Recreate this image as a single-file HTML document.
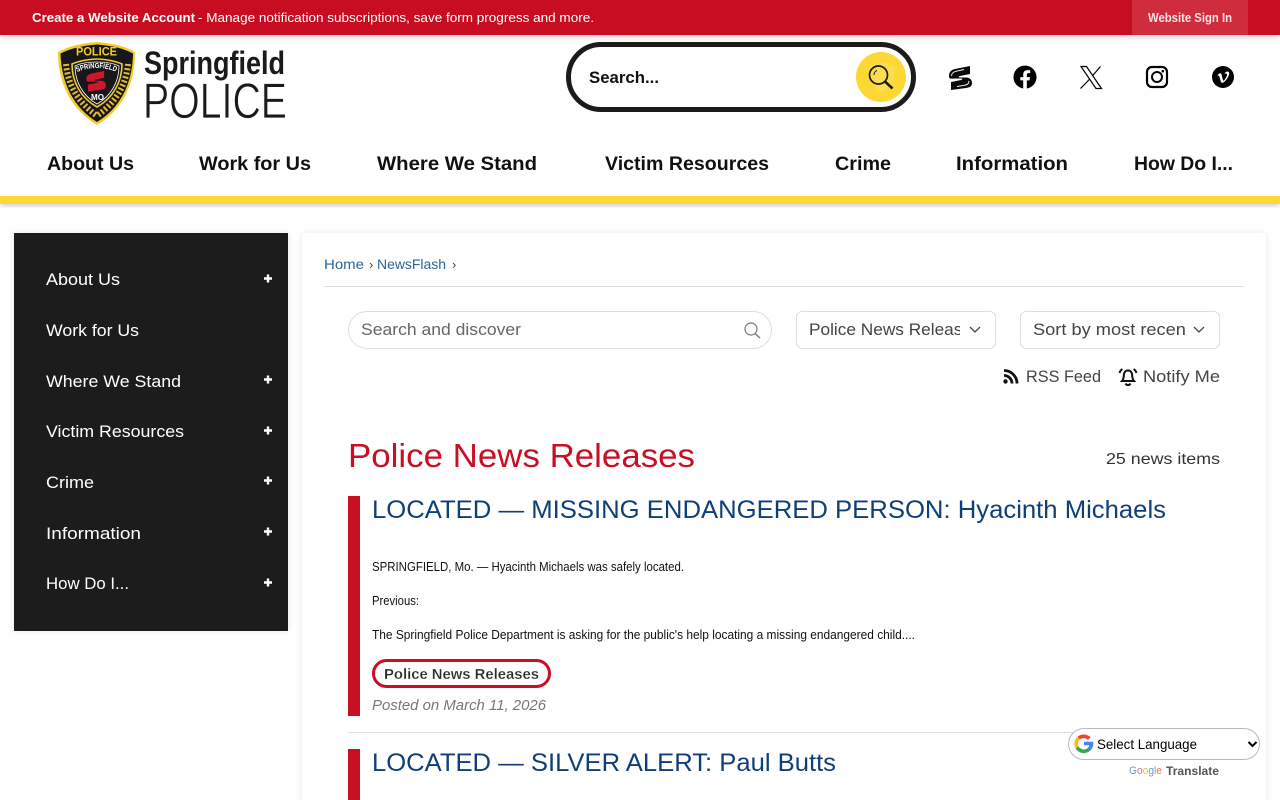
<!DOCTYPE html>
<html lang="en"><head><meta charset="utf-8"><title>Police News Releases</title>
<style>
html,body{margin:0;padding:0;width:1280px;height:800px;overflow:hidden;background:#fff}
svg{display:block;position:absolute;left:0;top:0}
text{font-family:"Liberation Sans",sans-serif}
.b{font-weight:bold}
.n{font-weight:bold;font-size:19px;fill:#111}
.s{font-size:17px;fill:#fff}
.i{font-style:italic}
</style></head><body>
<svg width="1280" height="800" viewBox="0 0 1280 800" xmlns="http://www.w3.org/2000/svg">
<defs>
<filter id="sh" x="-5%" y="-20%" width="110%" height="160%"><feDropShadow dx="0" dy="2" stdDeviation="3" flood-color="#000" flood-opacity=".2"/></filter>
<filter id="sc" x="-3%" y="-3%" width="106%" height="106%"><feDropShadow dx="0" dy="0" stdDeviation="3" flood-color="#000" flood-opacity=".09"/></filter>
<clipPath id="c1"><rect x="800" y="315" width="160" height="30"/></clipPath>
<clipPath id="c2"><rect x="1025" y="315" width="160" height="30"/></clipPath>
<path id="arc" d="M77 72Q97 64 117 72"/>
</defs>

<!-- top bar -->
<rect x="0" y="0" width="1280" height="35" fill="#c80f24" filter="url(#sh)"/>
<text x="32" y="22" font-size="13" class="b" fill="#fff" textLength="163" lengthAdjust="spacingAndGlyphs">Create a Website Account</text>
<text x="198" y="22" font-size="13" fill="#fff" textLength="396" lengthAdjust="spacingAndGlyphs">- Manage notification subscriptions, save form progress and more.</text>
<rect x="1132" y="0" width="116" height="35" fill="#cf2c3e"/>
<text x="1148" y="22" font-size="13" class="b" fill="#fbe4e6" textLength="84" lengthAdjust="spacingAndGlyphs">Website Sign In</text>

<!-- logo -->
<path d="M97 42C111 43 125 46 135 52C135 85 122 110 97 125C72 110 58 85 58 52C69 46 83 43 97 42Z" fill="#f2cb2c"/>
<path d="M97 44.500C110 45.500 123 48 133 53.500C132.500 84 120 108 97 122C74 108 61.500 84 60.500 53.500C71 48 84 45.500 97 44.500Z" fill="#17171a"/>
<path d="M66 64C68 85 78 102 96 115" fill="none" stroke="#e3bd2e" stroke-width="6" stroke-dasharray="2 2.2"/>
<path d="M128 64C126 85 116 102 98 115" fill="none" stroke="#e3bd2e" stroke-width="6" stroke-dasharray="2 2.2"/>
<path d="M97 59C105 59 115 61 122 64C122 82 113 98 97 107C81 98 72 82 72 64C79 61 89 59 97 59Z" fill="#17171a" stroke="#f2cb2c" stroke-width="1.600"/>
<path d="M97 62C104 62 113 63 119 66C119 82 111 96 97 104C83 96 75 82 75 66C81 63 90 62 97 62Z" fill="none" stroke="#fff" stroke-width=".8"/>
<text x="76" y="55.500" font-size="12" class="b" fill="#f2cb2c" textLength="41" lengthAdjust="spacingAndGlyphs">POLICE</text>
<text font-size="7.500" class="b" fill="#fff"><textPath href="#arc" textLength="40" lengthAdjust="spacingAndGlyphs">SPRINGFIELD</textPath></text>
<g transform="translate(85.500 71) scale(.85)"><path d="M1 10C1 6 3 4 7 3L22 0V8L12 10C10 10.500 10.500 11.500 12 11.500H18C22 11.500 24 14 24 17C24 20 22 21.500 18 22L3 24V16L13 14C15 13.500 14.500 12.500 13 12.500H7C3 12.500 1 13.500 1 10Z" fill="#d3152c"/></g>
<text x="91" y="100" font-size="8" class="b" fill="#fff" textLength="13" lengthAdjust="spacingAndGlyphs">MO</text>
<text x="144" y="74" font-size="32" class="b" fill="#1a1a1a" textLength="141" lengthAdjust="spacingAndGlyphs">Springfield</text>
<text x="143" y="118" font-size="50" fill="#1a1a1a" stroke="#fff" stroke-width=".7" textLength="144" lengthAdjust="spacingAndGlyphs">POLICE</text>

<!-- search -->
<rect x="568.500" y="44.500" width="345" height="65" rx="32.500" fill="#fff" stroke="#1c1a1b" stroke-width="5"/>
<text x="589" y="83" font-size="16.500" class="b" fill="#111" textLength="70" lengthAdjust="spacingAndGlyphs">Search...</text>
<circle cx="881" cy="77" r="25" fill="#fdd835"/>
<path d="M882 62L895 66C895 79 890 88 882 92C874 88 869 79 869 66Z" fill="#fddd50"/>
<circle cx="878.500" cy="75" r="9" fill="none" stroke="#1a1a1a" stroke-width="1.700"/>
<path d="M885 81.500L892.500 88.500" stroke="#1a1a1a" stroke-width="2.600" fill="none"/>
<path d="M874 75a4.500 4.500 0 0 1 3-4.500" stroke="#1a1a1a" stroke-width="1" fill="none"/>

<!-- socials -->
<g transform="translate(948 66)"><path d="M1 10C1 6 3 4 7 3L22 0V8L12 10C10 10.500 10.500 11.500 12 11.500H18C22 11.500 24 14 24 17C24 20 22 21.500 18 22L3 24V16L13 14C15 13.500 14.500 12.500 13 12.500H7C3 12.500 1 13.500 1 10Z" fill="#0a0a0a"/><path d="M3.500 10C3.500 7.500 5 6 8 5.300L16 3.500M9 20.500L17 19.200C20.500 18.500 21.500 16 20.500 15" fill="none" stroke="#fff" stroke-width=".9"/></g>
<g transform="translate(1013.500 65.500) scale(.96)"><path d="M24 12.073c0-6.627-5.373-12-12-12s-12 5.373-12 12c0 5.990 4.388 10.954 10.125 11.854v-8.385H7.078v-3.470h3.047V9.430c0-3.007 1.792-4.669 4.533-4.669 1.312 0 2.686.235 2.686.235v2.953H15.830c-1.491 0-1.956.925-1.956 1.874v2.250h3.328l-.532 3.470h-2.796v8.385C19.612 23.027 24 18.062 24 12.073z" fill="#000"/></g>
<path d="M1081 66.500h5.500l15 22h-5.500zM1100.500 66.500L1092.300 76M1089.300 79.500L1080.500 88.500" fill="none" stroke="#000" stroke-width="1.200"/>
<rect x="1147" y="67" width="20" height="20" rx="5" fill="none" stroke="#000" stroke-width="2.200"/>
<circle cx="1157" cy="77" r="5" fill="none" stroke="#000" stroke-width="2"/>
<circle cx="1162.800" cy="71.200" r="1.300" fill="#000"/>
<circle cx="1223" cy="77" r="11" fill="#000"/>
<path d="M1217.500 75l1.500-1.200c1.500-1 2.300-.5 2.700 1.200l1 4.300c.4 1.700 1 1.700 2 .3 1.500-2 2.500-4 2.300-5.300-.2-1.200-1.700-1-2.600-.2 .7-2.300 2.500-3 3.800-2.500 1.300.5 1.300 2.300.5 4-1.200 2.700-3.500 6-5.500 7-1.300.7-2 0-2.500-1.500l-1.300-4.500c-.3-1-.7-1.200-1.400-.8z" fill="#fff"/>

<!-- main nav -->
<text class="n" x="47" y="170" textLength="87" lengthAdjust="spacingAndGlyphs">About Us</text>
<text class="n" x="199" y="170" textLength="112" lengthAdjust="spacingAndGlyphs">Work for Us</text>
<text class="n" x="377" y="170" textLength="160" lengthAdjust="spacingAndGlyphs">Where We Stand</text>
<text class="n" x="605" y="170" textLength="164" lengthAdjust="spacingAndGlyphs">Victim Resources</text>
<text class="n" x="835" y="170" textLength="56" lengthAdjust="spacingAndGlyphs">Crime</text>
<text class="n" x="956" y="170" textLength="112" lengthAdjust="spacingAndGlyphs">Information</text>
<text class="n" x="1134" y="170" textLength="99" lengthAdjust="spacingAndGlyphs">How Do I...</text>
<rect x="0" y="196" width="1280" height="8" fill="#fdd835" filter="url(#sh)"/>

<!-- sidebar -->
<rect x="14" y="233" width="274" height="398" fill="#1c1a1b" filter="url(#sc)"/>
<text class="s" x="46" y="285" textLength="74" lengthAdjust="spacingAndGlyphs">About Us</text>
<text class="s" x="46" y="336" textLength="93" lengthAdjust="spacingAndGlyphs">Work for Us</text>
<text class="s" x="46" y="387" textLength="135" lengthAdjust="spacingAndGlyphs">Where We Stand</text>
<text class="s" x="46" y="437" textLength="138" lengthAdjust="spacingAndGlyphs">Victim Resources</text>
<text class="s" x="46" y="488" textLength="48" lengthAdjust="spacingAndGlyphs">Crime</text>
<text class="s" x="46" y="539" textLength="95" lengthAdjust="spacingAndGlyphs">Information</text>
<text class="s" x="46" y="589" textLength="83" lengthAdjust="spacingAndGlyphs">How Do I...</text>
<path d="M264 278.500h8M268 274.500v8M264 379.500h8M268 375.500v8M264 430.500h8M268 426.500v8M264 480.500h8M268 476.500v8M264 531.500h8M268 527.500v8M264 582.500h8M268 578.500v8" stroke="#fff" stroke-width="2.400" fill="none"/>

<!-- card -->
<rect x="302" y="233" width="964" height="600" rx="3" fill="#fff" filter="url(#sc)"/>
<text x="324" y="269" font-size="13.500" fill="#2b6699" textLength="40" lengthAdjust="spacingAndGlyphs">Home</text>
<text x="369" y="269" font-size="13" fill="#444">›</text>
<text x="377" y="269" font-size="13.500" fill="#2b6699" textLength="69" lengthAdjust="spacingAndGlyphs">NewsFlash</text>
<text x="452" y="269" font-size="13" fill="#444">›</text>
<rect x="324" y="286" width="920" height="1" fill="#ddd"/>

<!-- filters -->
<rect x="348.500" y="311.500" width="423" height="37" rx="18.500" fill="#fff" stroke="#ddd"/>
<text x="361" y="335" font-size="16.500" fill="#666" textLength="160" lengthAdjust="spacingAndGlyphs">Search and discover</text>
<circle cx="751" cy="329" r="6" fill="none" stroke="#777" stroke-width="1.200"/><path d="M755 333.500L760 338" stroke="#777" stroke-width="1.500"/>
<rect x="796.500" y="311.500" width="199" height="37" rx="6" fill="#fff" stroke="#ddd"/>
<text clip-path="url(#c1)" x="809" y="335" font-size="16.500" fill="#444" textLength="163" lengthAdjust="spacingAndGlyphs">Police News Release</text>
<path d="M970 327l5 5 5-5" fill="none" stroke="#444" stroke-width="1.300"/>
<rect x="1020.500" y="311.500" width="199" height="37" rx="6" fill="#fff" stroke="#ddd"/>
<text clip-path="url(#c2)" x="1033" y="335" font-size="16.500" fill="#444" textLength="158" lengthAdjust="spacingAndGlyphs">Sort by most recent</text>
<path d="M1194 327l5 5 5-5" fill="none" stroke="#444" stroke-width="1.300"/>

<circle cx="1005.500" cy="381.500" r="2.200" fill="#111"/>
<path d="M1004 375.500a8 8 0 0 1 8 8M1004 370.500a13 13 0 0 1 13 13" fill="none" stroke="#111" stroke-width="2.800"/>
<text x="1026" y="382" font-size="16.500" fill="#444" textLength="75" lengthAdjust="spacingAndGlyphs">RSS Feed</text>
<path d="M1122 381c2-2 1.500-4 2-7 .5-2.500 2-3.500 4-3.500s3.500 1 4 3.500c.5 3 0 5 2 7zM1125.500 383.500a2.800 2.800 0 0 0 5 0M1119.500 373c.5-2 1.500-3 2.800-4M1136.500 373c-.5-2-1.500-3-2.800-4" fill="none" stroke="#111" stroke-width="2"/>
<text x="1143" y="382" font-size="16.500" fill="#444" textLength="77" lengthAdjust="spacingAndGlyphs">Notify Me</text>

<!-- heading -->
<text x="348" y="467" font-size="33" fill="#c80f24" textLength="347" lengthAdjust="spacingAndGlyphs">Police News Releases</text>
<text x="1106" y="464" font-size="16" fill="#333" textLength="114" lengthAdjust="spacingAndGlyphs">25 news items</text>

<!-- item 1 -->
<rect x="348" y="496" width="12" height="220" fill="#c80f24"/>
<text x="372" y="518" font-size="25" fill="#0e3f77" textLength="794" lengthAdjust="spacingAndGlyphs">LOCATED — MISSING ENDANGERED PERSON: Hyacinth Michaels</text>
<text x="372" y="571" font-size="13" fill="#111" textLength="312" lengthAdjust="spacingAndGlyphs">SPRINGFIELD, Mo. — Hyacinth Michaels was safely located.</text>
<text x="372" y="605" font-size="13" fill="#111" textLength="47" lengthAdjust="spacingAndGlyphs">Previous:</text>
<text x="372" y="639" font-size="13" fill="#111" textLength="543" lengthAdjust="spacingAndGlyphs">The Springfield Police Department is asking for the public's help locating a missing endangered child....</text>
<rect x="373.500" y="660.500" width="176" height="26" rx="13" fill="#fff" stroke="#c80f24" stroke-width="3"/>
<text x="384" y="679" font-size="14.500" class="b" fill="#2a2a2a" stroke="#fff" stroke-width=".2" textLength="155" lengthAdjust="spacingAndGlyphs">Police News Releases</text>
<text x="372" y="710" font-size="15" class="i" fill="#777" textLength="174" lengthAdjust="spacingAndGlyphs">Posted on March 11, 2026</text>
<rect x="348" y="732" width="872" height="1" fill="#ddd"/>

<!-- item 2 -->
<rect x="348" y="749" width="12" height="51" fill="#c80f24"/>
<text x="372" y="771" font-size="25" fill="#0e3f77" textLength="464" lengthAdjust="spacingAndGlyphs">LOCATED — SILVER ALERT: Paul Butts</text>

<!-- translate -->
<rect x="1068.500" y="728.500" width="191" height="31" rx="15.500" fill="#fff" stroke="#b3bac6"/>
<g fill="none" stroke-width="3.600">
<path d="M1089.300 738.600a8 8 0 0 0-10.600-.6" stroke="#ea4335"/>
<path d="M1078.700 738a8 8 0 0 0-1.600 9.500" stroke="#fbbc05"/>
<path d="M1077.100 747.500a8 8 0 0 0 11.500 2.200" stroke="#34a853"/>
<path d="M1088.600 749.700a8 8 0 0 0 2.900-6.200h-7.500" stroke="#4285f4"/>
</g>
<text x="1097" y="749" font-size="14" fill="#000" textLength="100" lengthAdjust="spacingAndGlyphs">Select Language</text>
<path d="M1248.500 742l4 4 4-4" fill="none" stroke="#000" stroke-width="2"/>
<text x="1129" y="774" font-size="11" textLength="33" lengthAdjust="spacingAndGlyphs"><tspan fill="#6f94d8">G</tspan><tspan fill="#e57368">o</tspan><tspan fill="#e8c04e">o</tspan><tspan fill="#6f94d8">g</tspan><tspan fill="#6fb57c">l</tspan><tspan fill="#e57368">e</tspan></text>
<text x="1166" y="775" font-size="12" class="b" fill="#555" textLength="53" lengthAdjust="spacingAndGlyphs">Translate</text>
</svg>
</body></html>
